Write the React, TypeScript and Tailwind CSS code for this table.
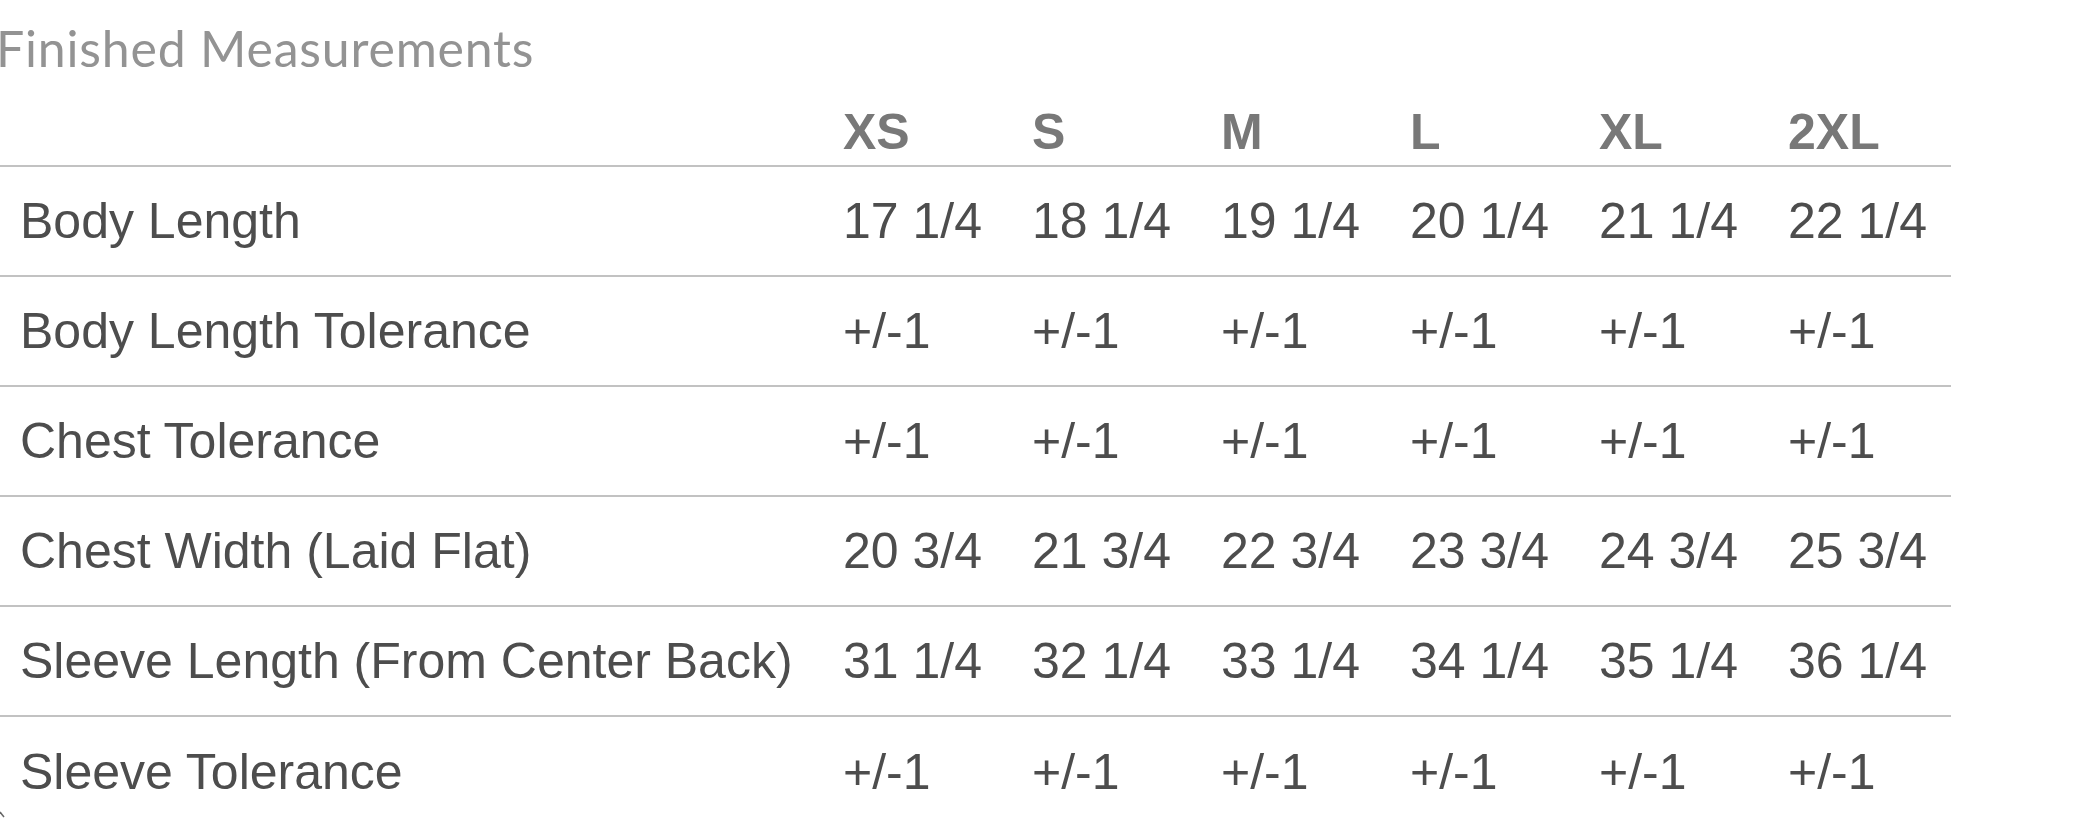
import React from 'react';

const sizes = ['XS', 'S', 'M', 'L', 'XL', '2XL'];

const rows: { label: string; values: string[] }[] = [
  { label: 'Body Length', values: ['17 1/4', '18 1/4', '19 1/4', '20 1/4', '21 1/4', '22 1/4'] },
  { label: 'Body Length Tolerance', values: ['+/-1', '+/-1', '+/-1', '+/-1', '+/-1', '+/-1'] },
  { label: 'Chest Tolerance', values: ['+/-1', '+/-1', '+/-1', '+/-1', '+/-1', '+/-1'] },
  { label: 'Chest Width (Laid Flat)', values: ['20 3/4', '21 3/4', '22 3/4', '23 3/4', '24 3/4', '25 3/4'] },
  { label: 'Sleeve Length (From Center Back)', values: ['31 1/4', '32 1/4', '33 1/4', '34 1/4', '35 1/4', '36 1/4'] },
  { label: 'Sleeve Tolerance', values: ['+/-1', '+/-1', '+/-1', '+/-1', '+/-1', '+/-1'] },
];

// label column + six size columns
const cols = 'grid grid-cols-[822px_189px_189px_189px_189px_189px_184px]';

export default function App() {
  return (
    <div className="relative w-[2088px] h-[818px] overflow-hidden bg-white">
      {/* Heading */}
      <h2 className="-ml-[4px] pt-[16px] h-[88px] text-[50px] leading-[64px] text-[#939393] font-['Lato',sans-serif] tracking-[0.8px]">
        Finished Measurements
      </h2>

      <div className="w-[1951px] font-['Liberation_Sans',Arial,sans-serif] text-[50px] leading-[50px]">
        {/* Size header */}
        <div className={`${cols} h-[79px] items-end border-b-2 border-[#c2c2c2] pb-[8px] font-bold text-[#787878]`}>
          <div />
          {sizes.map((s) => (
            <div key={s} className="pl-[21px]">{s}</div>
          ))}
        </div>

        {/* Rows */}
        {rows.map((r, i) => (
          <div
            key={r.label}
            className={`${cols} h-[110px] items-center text-[#4d4d4d] ${i < rows.length - 1 ? 'border-b-2 border-[#c2c2c2]' : ''}`}
          >
            <div className="pl-[20px] whitespace-nowrap">{r.label}</div>
            {r.values.map((v, j) => (
              <div key={j} className="pl-[21px] whitespace-nowrap">{v}</div>
            ))}
          </div>
        ))}
      </div>

      {/* corner of something below the crop */}
      <svg className="absolute left-0 bottom-0" width="8" height="8" viewBox="0 0 8 8">
        <path d="M0 2 L4 7" stroke="#666" strokeWidth="1.5" fill="none" />
      </svg>
    </div>
  );
}
